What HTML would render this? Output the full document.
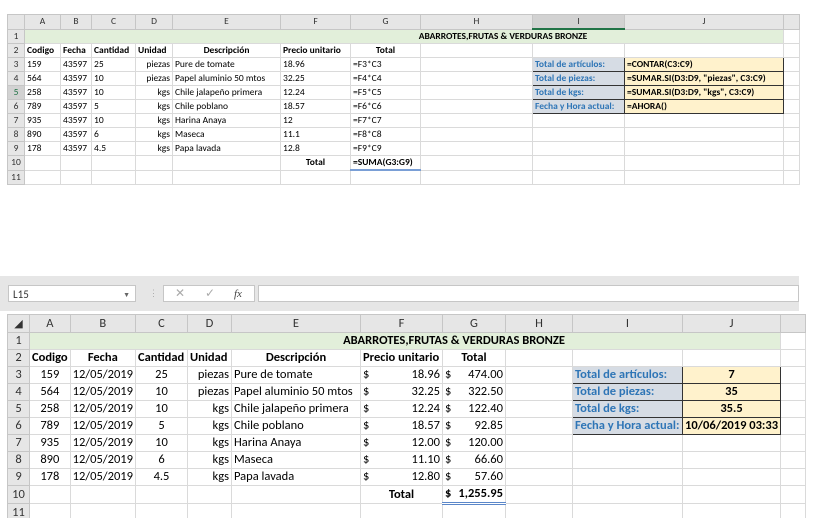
<!DOCTYPE html>
<html><head><meta charset="utf-8"><style>
body{margin:0;width:813px;height:531px;background:#fff;position:relative;overflow:hidden;font-family:Calibri,"Liberation Sans",sans-serif}
table{position:absolute;border-collapse:collapse;table-layout:fixed}
td{border:1px solid #dadada;padding:0 2px;white-space:nowrap;overflow:hidden;color:#000}
.t td{height:13px;font-size:9.5px;line-height:13px}
.b td{height:16px;font-size:12.5px;line-height:16px}
td.h{background:#e6e6e6;color:#333;text-align:center;border-color:#c6c6c6}
td.rh{background:#e6e6e6;color:#333;text-align:center;border-color:#c6c6c6;padding:0}
.c{text-align:center}.r{text-align:right}.bo{font-weight:bold}
.g{background:#e2efda}
.lab{background:#d6dce4;color:#2e75b6;font-weight:bold;border:1px solid #333!important}
.val{background:#fff2cc;font-weight:bold;border:1px solid #333!important}
.sel{background:#d2d2d2!important;border-bottom:2px solid #217346!important}
.rsel{background:#d2d2d2!important;color:#217346!important}
</style></head><body>

<table class="t" style="left:7px;top:14px">
<colgroup><col style="width:17px"><col style="width:36px"><col style="width:31px"><col style="width:44px"><col style="width:37px"><col style="width:108px"><col style="width:70px"><col style="width:70px"><col style="width:112px"><col style="width:92px"><col style="width:159px"><col style="width:16px"></colgroup>
<tr><td class="h"></td><td class="h">A</td><td class="h">B</td><td class="h">C</td><td class="h">D</td><td class="h">E</td><td class="h">F</td><td class="h">G</td><td class="h">H</td><td class="h sel">I</td><td class="h">J</td><td class="h"></td></tr>
<tr><td class="rh">1</td><td class="g" colspan="10" style="text-align:center;font-weight:bold;padding-left:200px">ABARROTES,FRUTAS &amp; VERDURAS BRONZE</td><td></td></tr>
<tr><td class="rh">2</td><td class="bo">Codigo</td><td class="bo">Fecha</td><td class="bo">Cantidad</td><td class="bo">Unidad</td><td class="bo c">Descripción</td><td class="bo">Precio unitario</td><td class="bo c">Total</td><td></td><td></td><td></td><td></td></tr>
<tr><td class="rh">3</td><td>159</td><td>43597</td><td>25</td><td class="r">piezas</td><td>Pure de tomate</td><td>18.96</td><td>=F3*C3</td><td></td><td class="lab">Total de artículos:</td><td class="val">=CONTAR(C3:C9)</td><td></td></tr>
<tr><td class="rh">4</td><td>564</td><td>43597</td><td>10</td><td class="r">piezas</td><td>Papel aluminio 50 mtos</td><td>32.25</td><td>=F4*C4</td><td></td><td class="lab">Total de piezas:</td><td class="val">=SUMAR.SI(D3:D9, "piezas", C3:C9)</td><td></td></tr>
<tr><td class="rh rsel">5</td><td>258</td><td>43597</td><td>10</td><td class="r">kgs</td><td>Chile jalapeño primera</td><td>12.24</td><td>=F5*C5</td><td></td><td class="lab">Total de kgs:</td><td class="val">=SUMAR.SI(D3:D9, "kgs", C3:C9)</td><td></td></tr>
<tr><td class="rh">6</td><td>789</td><td>43597</td><td>5</td><td class="r">kgs</td><td>Chile poblano</td><td>18.57</td><td>=F6*C6</td><td></td><td class="lab">Fecha y Hora actual:</td><td class="val">=AHORA()</td><td></td></tr>
<tr><td class="rh">7</td><td>935</td><td>43597</td><td>10</td><td class="r">kgs</td><td>Harina Anaya</td><td>12</td><td>=F7*C7</td><td></td><td></td><td></td><td></td></tr>
<tr><td class="rh">8</td><td>890</td><td>43597</td><td>6</td><td class="r">kgs</td><td>Maseca</td><td>11.1</td><td>=F8*C8</td><td></td><td></td><td></td><td></td></tr>
<tr><td class="rh">9</td><td>178</td><td>43597</td><td>4.5</td><td class="r">kgs</td><td>Papa lavada</td><td>12.8</td><td>=F9*C9</td><td></td><td></td><td></td><td></td></tr>
<tr><td class="rh">10</td><td></td><td></td><td></td><td></td><td></td><td class="bo c">Total</td><td class="bo" style="border-bottom:2px solid #7a9fd6">=SUMA(G3:G9)</td><td></td><td></td><td></td><td></td></tr>
<tr><td class="rh">11</td><td></td><td></td><td></td><td></td><td></td><td></td><td></td><td></td><td></td><td></td><td></td></tr>
</table>
<div style="position:absolute;left:0;top:186px;width:813px;height:60px;background:#fff"></div>

<div style="position:absolute;left:0;top:276px;width:799px;height:35px;background:#e6e6e6"></div>
<div style="position:absolute;left:8px;top:285px;width:128px;height:17px;background:#fff;border:1px solid #c6c6c6;font-size:11px;line-height:17px;color:#333;padding-left:4px;box-sizing:border-box">L15<span style="position:absolute;right:5px;font-size:7px;color:#666">▼</span></div>
<div style="position:absolute;left:149px;top:288px;font-size:9px;color:#aaa">⋮</div>
<div style="position:absolute;left:163px;top:285px;width:92px;height:17px;background:#fff;border:1px solid #c6c6c6;box-sizing:border-box;font-size:12px;line-height:16px;color:#aaa"><span style="position:absolute;left:11px">✕</span><span style="position:absolute;left:41px">✓</span><span style="position:absolute;left:70px;color:#444;font-family:'Liberation Serif',serif;font-style:italic;font-size:11px">fx</span></div>
<div style="position:absolute;left:258px;top:285px;width:541px;height:17px;background:#fff;border:1px solid #c6c6c6;box-sizing:border-box"></div>

<table class="b" style="left:7px;top:314px">
<colgroup><col style="width:22px"><col style="width:40px"><col style="width:65px"><col style="width:52px"><col style="width:44px"><col style="width:129px"><col style="width:82px"><col style="width:63px"><col style="width:67px"><col style="width:110px"><col style="width:93px"><col style="width:25px"></colgroup>
<tr><td class="h" style="height:17px;font-size:11px">◢</td><td class="h">A</td><td class="h">B</td><td class="h">C</td><td class="h">D</td><td class="h">E</td><td class="h">F</td><td class="h">G</td><td class="h">H</td><td class="h">I</td><td class="h">J</td><td class="h"></td></tr>
<tr><td class="rh">1</td><td class="g" colspan="10" style="text-align:center;font-weight:bold;padding-left:100px">ABARROTES,FRUTAS &amp; VERDURAS BRONZE</td><td></td></tr>
<tr><td class="rh">2</td><td class="bo">Codigo</td><td class="bo c">Fecha</td><td class="bo">Cantidad</td><td class="bo">Unidad</td><td class="bo c">Descripción</td><td class="bo">Precio unitario</td><td class="bo c">Total</td><td></td><td></td><td></td><td></td></tr>
<tr><td class="rh">3</td><td class="c">159</td><td class="c">12/05/2019</td><td class="c">25</td><td class="r">piezas</td><td>Pure de tomate</td><td>$<span style="float:right">18.96</span></td><td>$<span style="float:right">474.00</span></td><td></td><td class="lab">Total de artículos:</td><td class="val c">7</td><td></td></tr>
<tr><td class="rh">4</td><td class="c">564</td><td class="c">12/05/2019</td><td class="c">10</td><td class="r">piezas</td><td>Papel aluminio 50 mtos</td><td>$<span style="float:right">32.25</span></td><td>$<span style="float:right">322.50</span></td><td></td><td class="lab">Total de piezas:</td><td class="val c">35</td><td></td></tr>
<tr><td class="rh">5</td><td class="c">258</td><td class="c">12/05/2019</td><td class="c">10</td><td class="r">kgs</td><td>Chile jalapeño primera</td><td>$<span style="float:right">12.24</span></td><td>$<span style="float:right">122.40</span></td><td></td><td class="lab">Total de kgs:</td><td class="val c">35.5</td><td></td></tr>
<tr><td class="rh">6</td><td class="c">789</td><td class="c">12/05/2019</td><td class="c">5</td><td class="r">kgs</td><td>Chile poblano</td><td>$<span style="float:right">18.57</span></td><td>$<span style="float:right">92.85</span></td><td></td><td class="lab">Fecha y Hora actual:</td><td class="val c">10/06/2019 03:33</td><td></td></tr>
<tr><td class="rh">7</td><td class="c">935</td><td class="c">12/05/2019</td><td class="c">10</td><td class="r">kgs</td><td>Harina Anaya</td><td>$<span style="float:right">12.00</span></td><td>$<span style="float:right">120.00</span></td><td></td><td></td><td></td><td></td></tr>
<tr><td class="rh">8</td><td class="c">890</td><td class="c">12/05/2019</td><td class="c">6</td><td class="r">kgs</td><td>Maseca</td><td>$<span style="float:right">11.10</span></td><td>$<span style="float:right">66.60</span></td><td></td><td></td><td></td><td></td></tr>
<tr><td class="rh">9</td><td class="c">178</td><td class="c">12/05/2019</td><td class="c">4.5</td><td class="r">kgs</td><td>Papa lavada</td><td>$<span style="float:right">12.80</span></td><td>$<span style="float:right">57.60</span></td><td></td><td></td><td></td><td></td></tr>
<tr><td class="rh">10</td><td></td><td></td><td></td><td></td><td></td><td class="bo c">Total</td><td class="bo" style="border-bottom:3px double #5b87c9;border-top:1px solid #5b87c9">$<span style="float:right">1,255.95</span></td><td></td><td></td><td></td><td></td></tr>
<tr><td class="rh">11</td><td></td><td></td><td></td><td></td><td></td><td></td><td></td><td></td><td></td><td></td><td></td></tr>
</table>
<div style="position:absolute;left:0;top:518px;width:813px;height:13px;background:#fff"></div>
</body></html>
